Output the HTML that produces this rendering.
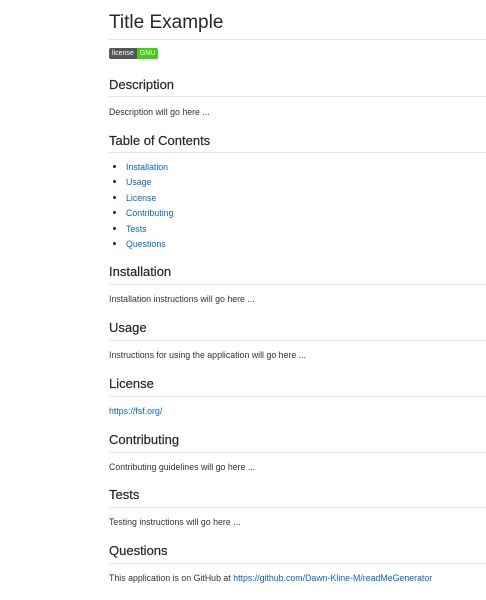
<!DOCTYPE html>
<html><head><meta charset="utf-8"><style>
body{margin:0;background:#fff;width:486px;height:600px;position:relative;overflow:hidden;font-family:"Liberation Sans",sans-serif;color:#24292e}
.a{position:absolute;left:109px;white-space:nowrap}
h1,h2{margin:0;font-weight:normal}
h1{font-size:19px}
h2{font-size:13px;-webkit-text-stroke:0.2px #24292e}
.r{position:absolute;left:109px;right:0;height:1px;background:#e4e7ea}
.t{font-size:8.8px;color:#333}
a{color:#0366d6;text-decoration:none}
ul{margin:0;padding:0 0 0 17px;font-size:8.8px}
li{height:15.4px;line-height:8px}
li::marker{color:#24292e;font-size:11px}
</style></head><body>
<h1 class="a" style="top:12px">Title Example</h1>
<div class="r" style="top:39px"></div>
<div class="a" style="top:48px;height:11px;font-size:7px;line-height:11px;border-radius:2px;overflow:hidden;display:flex"><span style="background:#555;color:#fff;padding:0 3px">license</span><span style="background:#4c1;color:#fff;padding:0 3px">GNU</span></div>

<h2 class="a" style="top:77px">Description</h2><div class="r" style="top:96px"></div>
<div class="a t" style="top:107px">Description will go here ...</div>

<h2 class="a" style="top:133px">Table of Contents</h2><div class="r" style="top:152px"></div>
<ul class="a" style="top:163px;left:109px"><li><a>Installation</a></li><li><a>Usage</a></li><li><a>License</a></li><li><a>Contributing</a></li><li><a>Tests</a></li><li><a>Questions</a></li></ul>

<h2 class="a" style="top:264px">Installation</h2><div class="r" style="top:284px"></div>
<div class="a t" style="top:294px">Installation instructions will go here ...</div>

<h2 class="a" style="top:320px">Usage</h2><div class="r" style="top:340px"></div>
<div class="a t" style="top:350px">Instructions for using the application will go here ...</div>

<h2 class="a" style="top:376px">License</h2><div class="r" style="top:396px"></div>
<div class="a t" style="top:406px"><a>https://fsf.org/</a></div>

<h2 class="a" style="top:432px">Contributing</h2><div class="r" style="top:452px"></div>
<div class="a t" style="top:462px">Contributing guidelines will go here ...</div>

<h2 class="a" style="top:487px">Tests</h2><div class="r" style="top:507px"></div>
<div class="a t" style="top:517px">Testing instructions will go here ...</div>

<h2 class="a" style="top:543px">Questions</h2><div class="r" style="top:563px"></div>
<div class="a t" style="top:573px">This application is on GitHub at <a>https://github.com/Dawn-Kline-M/readMeGenerator</a></div>
</body></html>
